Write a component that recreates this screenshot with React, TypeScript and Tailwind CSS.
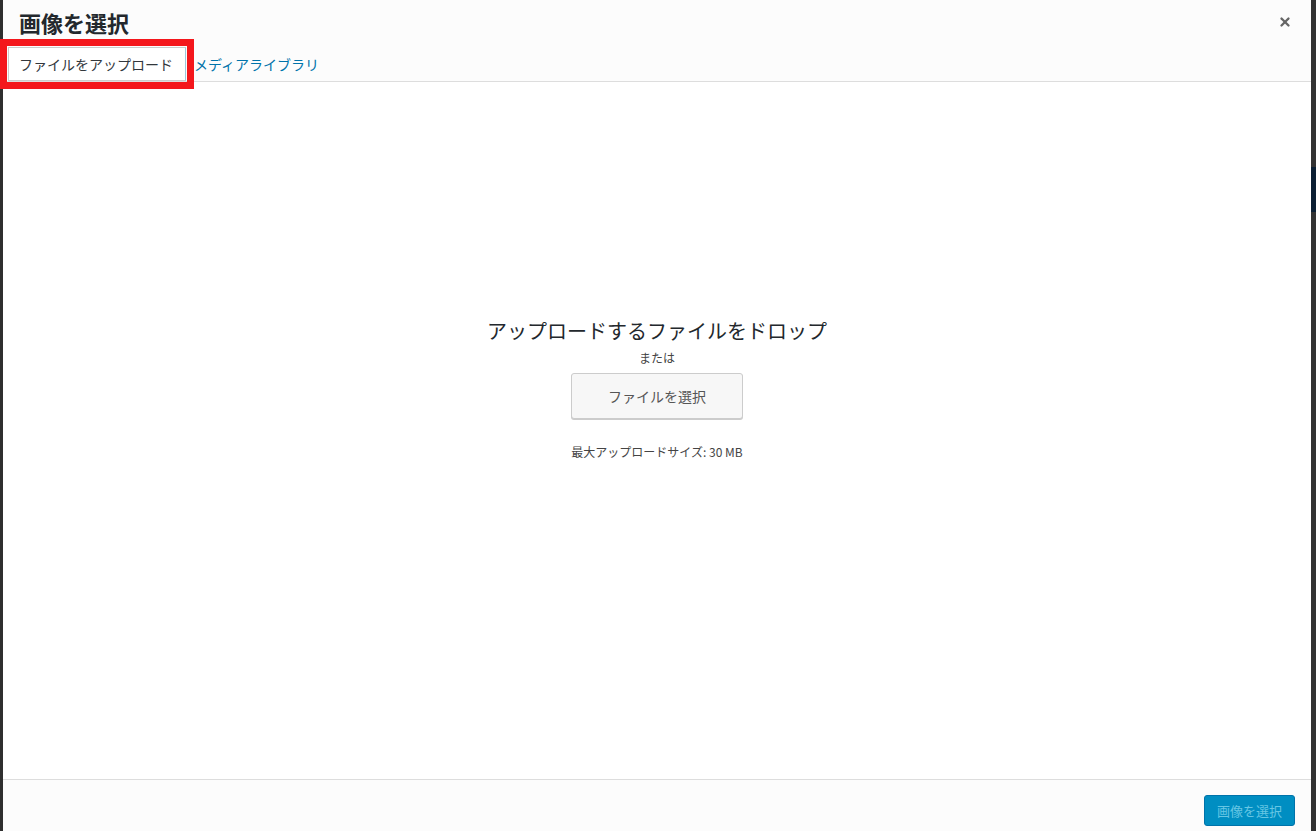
import { X } from "lucide-react";

const jp = "font-['Noto_Sans_CJK_JP','Noto_Sans',sans-serif]";

export default function App() {
  return (
    <div className={`flex h-[831px] w-full bg-[#2f2f2f] pl-[3px] ${jp}`}>
      <div className="flex flex-1 flex-col bg-white">
        {/* header */}
        <div className="flex flex-col border-b border-[#dddddd] bg-[#fcfcfc]">
          <div className="flex h-[46px] items-start justify-between pl-[16px] pr-[19px] pt-[7px]">
            <h1 className="text-[22px] font-bold leading-[30px] text-[#23282d]">画像を選択</h1>
            <button className="mt-[8px] text-[#666666]">
              <X size={14} strokeWidth={4} />
            </button>
          </div>
          <div className="-mb-px flex items-end pl-[5px]">
            <div className="mb-px flex h-[34px] w-[178px] items-center border border-[#cccccc] border-r-[#9cc8dc] bg-white px-[10px] text-[14px] text-[#32373c] outline-[7px] outline-offset-1 outline-[#f4171c] outline-solid">
              ファイルをアップロード
            </div>
            <div className="flex h-[36px] items-center pl-[8px] text-[14px] text-[#0073aa]">
              メディアライブラリ
            </div>
          </div>
        </div>

        {/* uploader */}
        <div className="flex flex-1 flex-col items-center pt-[235px] text-[#23282d]">
          <p className="text-[20px] leading-[28px]">アップロードするファイルをドロップ</p>
          <p className="mt-[4px] text-[12px] leading-[18px] text-[#444444]">または</p>
          <button className="mt-[6px] flex h-[46px] w-[172px] items-center justify-center rounded-[3px] border border-[#cccccc] bg-[#f7f7f7] text-[14px] text-[#555555] shadow-[0_1px_0_#cccccc]">
            ファイルを選択
          </button>
          <p className="mt-[24px] text-[12px] leading-[18px] text-[#444444]">最大アップロードサイズ: 30 MB</p>
        </div>

        {/* footer */}
        <div className="flex h-[52px] justify-end border-t border-[#dddddd] bg-[#fcfcfc] pr-[16px] pt-[15px]">
          <button className="flex h-[31px] w-[91px] items-center justify-center rounded-[3px] border border-[#0073aa] bg-[#008ec2] text-[13px] text-[#66c6e4]">
            画像を選択
          </button>
        </div>
      </div>
      <div className="flex w-[5px] flex-col bg-[#333333]">
        <div className="mt-[167px] h-[45px] bg-[#0b1f33]" />
      </div>
    </div>
  );
}
